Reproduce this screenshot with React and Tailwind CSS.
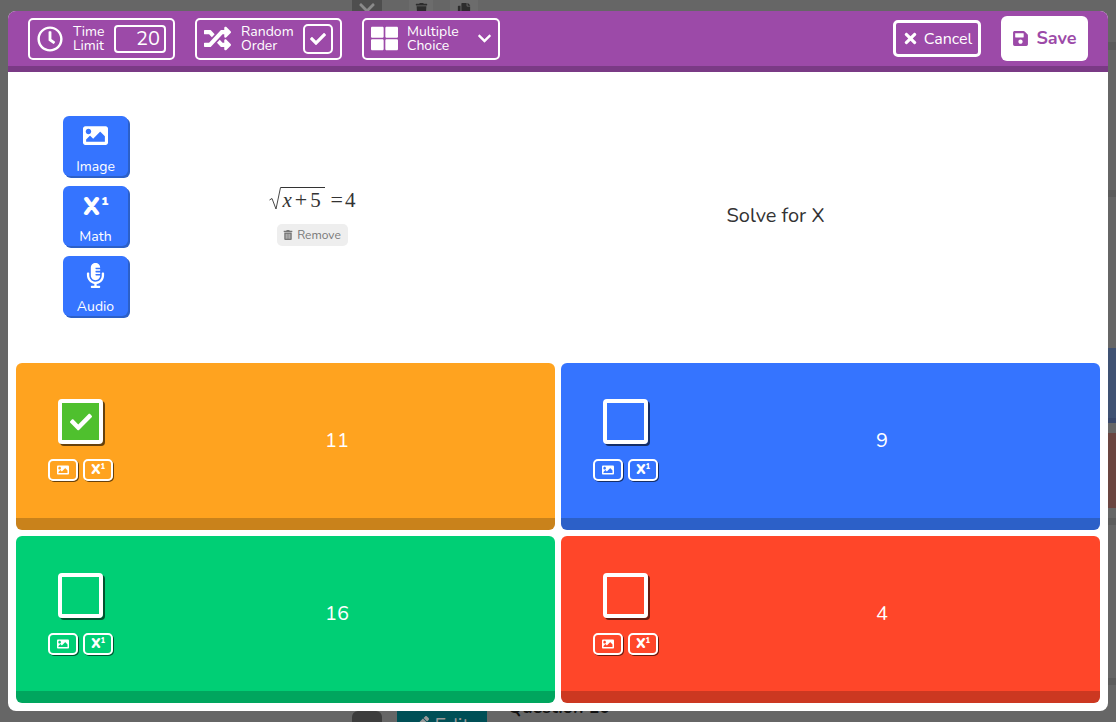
import {
  FaRegClock,
  FaRandom,
  FaCheck,
  FaThLarge,
  FaChevronDown,
  FaTimes,
  FaSave,
  FaImage,
  FaMicrophoneAlt,
  FaTrashAlt,
  FaCopy,
  FaTrash,
  FaPen,
} from "react-icons/fa";

const font = "font-['Nunito','Lato','Noto_Sans',sans-serif]";

function XOne({ big }) {
  return big ? (
    <span className="flex items-start font-black text-white leading-none h-[24px] mt-[1px]">
      <span className="text-[25px] leading-[27px]">X</span>
      <span className="text-[12px] leading-[14px] ml-[1px]">1</span>
    </span>
  ) : (
    <span className="flex items-start font-black text-white leading-none">
      <span className="text-[14px] leading-[14px]">X</span>
      <span className="text-[7px] leading-[8px]">1</span>
    </span>
  );
}

function MediaButton({ icon, label }) {
  return (
    <button className="w-[65px] h-[60px] flex flex-col items-center rounded-[6px] bg-[#3574ff] shadow-[2px_2px_0_#2c60c8] text-white pt-[7px]">
      <span className="h-[34px] shrink-0 flex items-start justify-center">{icon}</span>
      <span className="text-[14px] leading-[19px] shrink-0">{label}</span>
    </button>
  );
}

function Option({ text, face, edge, checked, top }) {
  return (
    <div className={`h-[167px] rounded-[6px] flex items-center pl-[32px] border-b-[12px] ${face} ${edge}`}>
      <div className={`w-[65px] flex flex-col items-center gap-[15px] ${top ? "mb-[1px]" : ""}`}>
        <div
          className={`w-[45px] h-[45px] rounded-[4px] border-[4px] border-white shadow-[2px_2px_0_rgba(0,0,0,0.6)] flex items-center justify-center ${checked ? "bg-[#4fc02e]" : ""}`}
        >
          {checked && <FaCheck className="text-white text-[22px]" />}
        </div>
        <div className="flex gap-[5px]">
          <div className="w-[30px] h-[22px] rounded-[5px] border-2 border-white shadow-[1px_1px_0_rgba(0,0,0,0.6)] flex items-center justify-center">
            <FaImage className="text-white text-[12px]" />
          </div>
          <div className="w-[30px] h-[22px] rounded-[5px] border-2 border-white shadow-[1px_1px_0_rgba(0,0,0,0.6)] flex items-center justify-center">
            <XOne />
          </div>
        </div>
      </div>
      <div className="flex-1 ml-[6px] text-center text-white text-[20px] leading-[28px]">{text}</div>
    </div>
  );
}

export default function App() {
  return (
    <div className={`relative w-[1116px] h-[722px] overflow-hidden bg-[#666] ${font}`}>
      {/* page behind the dialog */}
      <div className="flex h-full">
        <div className="flex-1 flex flex-col justify-between">
          <div className="h-[11px] overflow-hidden flex items-end pl-[352px]">
            <div className="w-[30px] h-[11px] bg-[#4e4e4e] flex items-end justify-center">
              <FaChevronDown className="text-[#8a8a8a] text-[18px] mb-[-6px]" />
            </div>
            <div className="ml-[27px] w-[24px] h-[11px] bg-[#6c6c6c] flex items-end justify-center">
              <FaTrash className="text-[#2d2d2d] text-[13px] mb-[-5px]" />
            </div>
            <div className="ml-[17px] w-[28px] h-[11px] bg-[#6c6c6c] flex items-end justify-center">
              <FaCopy className="text-[#2d2d2d] text-[14px] mb-[-6px]" />
            </div>
          </div>
          <div className="h-[11px] overflow-hidden flex pl-[352px]">
            <div className="w-[30px] h-[20px] rounded-t-[6px] bg-[#3d3d3d]" />
            <div className="w-[90px] h-[20px] ml-[15px] bg-[#004f56] flex justify-center gap-[6px] pt-[3px] text-[#999] text-[20px] leading-[24px]">
              <FaPen className="text-[14px] mt-[2px]" />
              Edit
            </div>
            <div className="ml-[21px] mt-[-16px] text-[18px] leading-[24px] font-bold text-[#111]">Question 10</div>
          </div>
        </div>
        <div className="w-2 flex flex-col">
          <div className="h-[42px]" />
          <div className="h-[8px] bg-[#5c5c5c]" />
          <div className="h-[140px]" />
          <div className="h-[7px] bg-[#5c5c5c]" />
          <div className="h-[151px]" />
          <div className="h-[75px] bg-[#3f5172] border-b-[5px] border-[#38476a]" />
          <div className="h-[10px]" />
          <div className="h-[75px] bg-[#6a4540]" />
          <div className="h-[10px]" />
          <div className="h-[7px] bg-[#5c5c5c]" />
          <div className="h-[153px]" />
          <div className="h-[7px] bg-[#5c5c5c]" />
        </div>
      </div>

      {/* dialog */}
      <div className="absolute left-[8px] top-[11px] w-[1100px] h-[700px] rounded-[8px] bg-white overflow-hidden">
        <div className="h-[61px] bg-[#9c4aa8] border-b-[6px] border-[#7a3a85] flex items-center pl-[20px] pr-[20px] text-white">
          <div className="w-[147px] h-[42px] border-2 border-white rounded-[5px] flex items-center pl-[7px]">
            <FaRegClock className="text-[26px]" />
            <div className="ml-[10px] w-[33px] text-[14px] leading-[14px]">
              <div>Time</div>
              <div>Limit</div>
            </div>
            <div className="ml-[8px] w-[52px] h-[28px] border-2 border-white rounded-[4px] text-right pr-[4px] text-[20px] leading-[24px]">
              20
            </div>
          </div>
          <div className="ml-[20px] w-[147px] h-[42px] border-2 border-white rounded-[5px] flex items-center pl-[7px]">
            <FaRandom className="text-[27px]" />
            <div className="ml-[10px] w-[52px] text-[14px] leading-[14px]">
              <div>Random</div>
              <div>Order</div>
            </div>
            <div className="ml-[10px] w-[30px] h-[30px] border-2 border-white rounded-[5px] flex items-center justify-center">
              <FaCheck className="text-[16px]" />
            </div>
          </div>
          <div className="ml-[20px] w-[138px] h-[42px] border-2 border-white rounded-[5px] flex items-center pl-[7px]">
            <FaThLarge className="text-[27px]" />
            <div className="ml-[9px] w-[52px] text-[14px] leading-[14px]">
              <div>Multiple</div>
              <div>Choice</div>
            </div>
            <FaChevronDown className="ml-[18px] text-[15px]" />
          </div>
          <button className="ml-auto w-[88px] h-[37px] border-[3px] border-white rounded-[5px] flex items-center justify-center gap-[5px] text-[16px]">
            <FaTimes className="text-[17px]" />
            Cancel
          </button>
          <button className="ml-[20px] w-[87px] h-[45px] bg-white rounded-[6px] flex items-center justify-center gap-[7px] text-[#9c4aa8] text-[18px] font-bold">
            <FaSave className="text-[17px]" />
            Save
          </button>
        </div>

        <div className="h-[291px] flex items-center pb-[3px]">
          <div className="ml-[55px] flex flex-col gap-[10px]">
            <MediaButton icon={<FaImage className="text-[25px]" />} label="Image" />
            <MediaButton icon={<XOne big />} label="Math" />
            <MediaButton icon={<FaMicrophoneAlt className="text-[25px]" />} label="Audio" />
          </div>
          <div className="ml-[55px] w-[258px] flex flex-col items-center">
            <div className="h-[24px] flex items-end font-['Liberation_Serif',serif] text-[#333] text-[21px] leading-[22px] whitespace-nowrap">
              <svg width="12" height="24" viewBox="0 0 12 24" fill="none" stroke="#333">
                <path d="M0.5 13 L3 11.5 L7 22 L11.5 0.5 L12 0.5" strokeWidth="0.9" />
              </svg>
              <span className="w-[44px] h-[24px] border-t border-[#333] flex items-end gap-[3px] pl-[2px]">
                <i>x</i>
                <span className="text-[22px]">+</span>
                <span>5</span>
              </span>
              <span className="ml-[6px] mr-[2px] text-[22px]">=</span>
              <span>4</span>
            </div>
            <button className="mt-[13px] w-[71px] h-[22px] rounded-[5px] bg-[#eeeeee] text-[#777] text-[12px] leading-[22px] flex items-center justify-center gap-[4px]">
              <FaTrashAlt className="text-[10px]" />
              Remove
            </button>
          </div>
          <div className="flex-1 ml-[2px] text-center text-[20px] leading-[28px] text-[#333]">Solve for X</div>
        </div>

        <div className="grid grid-cols-2 gap-[6px] px-[8px]">
          <Option text="11" face="bg-[#ffa31f]" edge="border-[#c9821b]" checked top />
          <Option text="9" face="bg-[#3574ff]" edge="border-[#2c60c8]" top />
          <Option text="16" face="bg-[#00cf75]" edge="border-[#00a65e]" />
          <Option text="4" face="bg-[#ff4629]" edge="border-[#cc3821]" />
        </div>
      </div>
    </div>
  );
}
